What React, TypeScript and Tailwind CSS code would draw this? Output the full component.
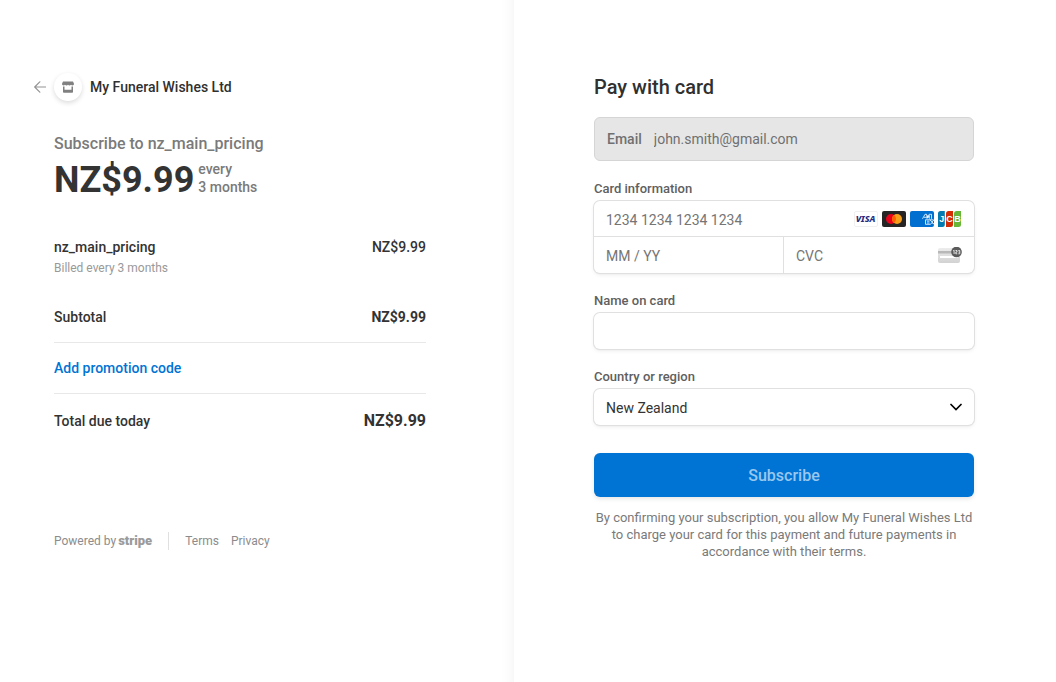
import { useState } from "react";
import type { ReactNode } from "react";

const COMPANY = "My Funeral Wishes Ltd";
const PRODUCT = "nz_main_pricing";
const PRICE = "NZ$9.99";

const countries = ["Australia", "Canada", "New Zealand", "United Kingdom", "United States"];

// Shared look of the white form fields: 1px outline plus a soft drop shadow
const fieldBox =
  "rounded-md bg-white shadow-[0_0_0_1px_#e0e0e0,0_2px_4px_0_rgba(0,0,0,0.07),0_1px_2px_0_rgba(0,0,0,0.05)]";

const BackArrow = () => (
  <svg viewBox="0 0 12 12" className="h-3 w-3" aria-hidden="true">
    <path
      d="M11.5 6H1M5.8 0.8 0.7 6l5.100 5.200"
      fill="none"
      stroke="#949494"
      strokeWidth="1.2"
      strokeLinecap="round"
      strokeLinejoin="round"
    />
  </svg>
);

const StoreIcon = () => (
  <svg viewBox="0 0 12 12" className="h-3 w-3" aria-hidden="true">
    <path
      d="M1 0.500h10l1 2.300c0 1-.7 1.700-1.500 1.700-.7 0-1.200-.3-1.500-.8-.3.5-.9.8-1.500.8s-1.200-.3-1.500-.8c-.3.5-.9.8-1.500.8S3.300 4.200 3 3.700c-.3.5-.8.8-1.500.8C.7 4.500 0 3.800 0 2.800z"
      fill="#808080"
    />
    <path d="M1 5.500h1.500v3.200h7V5.500H11V11a.8.8 0 0 1-.8.8H1.800A.8.8 0 0 1 1 11z" fill="#808080" />
  </svg>
);

const VisaIcon = () => (
  <svg viewBox="0 0 24 16" className="h-4 w-6" role="img" aria-label="Visa">
    <rect x="0.5" y="0.5" width="23" height="15" rx="1.5" fill="#fff" stroke="#f0f0f0" />
    <text
      x="11.5"
      y="11.300"
      textAnchor="middle"
      fontFamily="Noto Sans, sans-serif"
      fontSize="9"
      fontWeight="800"
      fontStyle="italic"
      fill="#252b80"
    >
      VISA
    </text>
  </svg>
);

const MastercardIcon = () => (
  <svg viewBox="0 0 24 16" className="h-4 w-6" role="img" aria-label="Mastercard">
    <rect width="24" height="16" rx="2" fill="#252525" />
    <circle cx="9" cy="8" r="5" fill="#eb001b" />
    <circle cx="15" cy="8" r="5" fill="#f79e1b" />
    <path d="M12 4a5 5 0 0 1 0 8 5 5 0 0 1 0-8z" fill="#ff5f00" />
  </svg>
);

const AmexIcon = () => (
  <svg viewBox="0 0 24 16" className="h-4 w-6" role="img" aria-label="American Express">
    <rect width="24" height="16" rx="2" fill="#016fd0" />
    <g fill="none" stroke="#fff" strokeWidth="0.8">
      <path d="M12.500 7.800 15 3.300h1.500l1.300 3 1.400-3h2.300v4.500M14 6.300h2.800M17 7.800V4.500l.8 2.500 1.500-2.500v3.300" />
      <path d="M23.500 8.800H15.500v4.500h5l1.500-1.800 1.800 1.800M19.500 10.200h-2.500M19.500 12h-2.500M20 8.800l4 4.500M24 8.800l-2 2.200" />
    </g>
  </svg>
);

const JcbIcon = () => (
  <svg viewBox="0 0 24 16" className="h-4 w-6" role="img" aria-label="JCB">
    <path d="M2.500 0h4.300v13.500A2.500 2.500 0 0 1 4.300 16H0V2.500A2.500 2.500 0 0 1 2.500 0z" fill="#047ab1" />
    <path d="M10.500 0h4.500v13.500a2.500 2.500 0 0 1-2.500 2.500H8V2.500A2.500 2.500 0 0 1 10.500 0z" fill="#d42d06" />
    <path d="M18.500 0H23v13.500a2.500 2.500 0 0 1-2.500 2.500H16V2.500A2.500 2.500 0 0 1 18.500 0z" fill="#67b637" />
    <g fontFamily="Liberation Sans, sans-serif" fontSize="9" fontWeight="700" fill="#fff" textAnchor="middle">
      <text x="3.800" y="11.200">J</text>
      <text x="11.600" y="11.200">C</text>
      <text x="19.500" y="11.200">B</text>
    </g>
  </svg>
);

const CvcIcon = () => (
  <svg viewBox="0 0 24 16" className="h-4 w-6" aria-hidden="true">
    <defs>
      <linearGradient id="cvc-card" x1="0" y1="0" x2="0" y2="1">
        <stop offset="0" stopColor="#ececec" />
        <stop offset="1" stopColor="#d2d2d2" />
      </linearGradient>
    </defs>
    <rect y="1" width="22" height="15" rx="2" fill="url(#cvc-card)" />
    <rect y="4" width="22" height="2.500" fill="#b8b8b8" />
    <rect x="2" y="9" width="18" height="2" fill="#fff" />
    <circle cx="18.500" cy="5" r="5.300" fill="#5a5a5a" />
    <path
      d="M15.200 3.900l.9-.7v3.800M17.500 3.500h1.500v1.600h-1.200v1.700h1.500M20.300 3.500h1.500v3.300h-1.500M20.500 5.100h1.200"
      fill="none"
      stroke="#fff"
      strokeWidth="0.8"
    />
  </svg>
);

interface FieldProps {
  id: string;
  label: string;
  children: ReactNode;
}

const Field = ({ id, label, children }: FieldProps) => (
  <div className="mt-5">
    <label htmlFor={id} className="block pb-1 text-[13px] leading-4 font-medium text-[#606060]">
      {label}
    </label>
    {children}
  </div>
);

const OrderSummary = () => (
  <section className="flex justify-end bg-white px-6 pt-[73px] pb-10 shadow-[inset_-16px_0_16px_-16px_rgba(0,0,0,0.06)] md:pr-20">
    <div className="w-full max-w-[380px] pr-2">
      <header className="-ml-5 flex h-7 items-center">
        <a href="#" aria-label="Back" className="mr-2">
          <BackArrow />
        </a>
        <span className="flex h-7 w-7 items-center justify-center rounded-full bg-white shadow-[0_2px_5px_rgba(0,0,0,0.14)]">
          <StoreIcon />
        </span>
        <span className="ml-2 text-sm font-medium text-[#303030]">{COMPANY}</span>
      </header>

      <h1 className="mt-[33px] text-base leading-5 font-medium text-[#7a7a7a]">Subscribe to {PRODUCT}</h1>
      <div className="mt-1 flex items-start gap-1">
        <span className="text-4xl leading-[44px] font-bold text-[#333333]">{PRICE}</span>
        <span className="pt-0.5 text-sm leading-[18px] font-medium text-[#7a7a7a]">
          every
          <br />
          3 months
        </span>
      </div>

      <div className="mt-[35px] flex justify-between text-sm leading-5 font-medium text-[#333333]">
        <div>
          <p>{PRODUCT}</p>
          <p className="pt-px text-xs leading-5 font-normal text-[#999999]">Billed every 3 months</p>
        </div>
        <p>{PRICE}</p>
      </div>

      <div className="mt-7 text-sm leading-5 font-medium text-[#333333]">
        <div className="flex justify-between border-b border-[#e8e8e8] pt-px pb-[15px]">
          <span>Subtotal</span>
          <span className="font-bold">{PRICE}</span>
        </div>
        <div className="border-b border-[#e8e8e8] py-[15px]">
          <button type="button" className="block font-medium text-[#0074d4]">
            Add promotion code
          </button>
        </div>
        <div className="flex items-center justify-between pt-[17px]">
          <span>Total due today</span>
          <span className="text-base leading-5 font-bold">{PRICE}</span>
        </div>
      </div>

      <footer className="mt-[100px] flex items-center text-xs leading-5 text-[#8c8c8c]">
        <a href="#" className="flex items-center gap-0.5">
          Powered by <span className="text-[13px] font-black text-[#9b9b9b]">stripe</span>
        </a>
        <span className="mx-4 h-[18px] w-px bg-[#e0e0e0]" />
        <a href="#">Terms</a>
        <a href="#" className="ml-3">
          Privacy
        </a>
      </footer>
    </div>
  </section>
);

const PaymentForm = () => {
  const [country, setCountry] = useState("New Zealand");

  return (
    <section className="bg-white px-6 pt-[73px] pb-10 md:pl-20">
      <form className="w-full max-w-[380px]" onSubmit={(e) => e.preventDefault()}>
        <h2 className="text-xl leading-7 font-medium text-[#303030]">Pay with card</h2>

        <div className="mt-4 flex h-11 items-center gap-3 rounded-md border border-[#d5d5d5] bg-[#e6e6e6] px-3 text-sm text-[#707070]">
          <label htmlFor="email" className="font-medium">
            Email
          </label>
          <input
            id="email"
            type="email"
            readOnly
            value="john.smith@gmail.com"
            className="min-w-0 flex-1 outline-none"
          />
        </div>

        <Field id="card-number" label="Card information">
          <div className={`${fieldBox} text-sm text-[#333333]`}>
            <div className="flex h-9 items-center border-b border-[#e0e0e0] px-3">
              <input
                id="card-number"
                placeholder="1234 1234 1234 1234"
                className="min-w-0 flex-1 pt-0.5 outline-none placeholder:text-[#757575]"
              />
              <div className="flex gap-1">
                <VisaIcon />
                <MastercardIcon />
                <AmexIcon />
                <JcbIcon />
              </div>
            </div>
            <div className="flex h-9">
              <input
                aria-label="Expiry date"
                placeholder="MM / YY"
                className="w-1/2 border-r border-[#e0e0e0] px-3 pt-0.5 outline-none placeholder:text-[#757575]"
              />
              <div className="flex w-1/2 items-center px-3">
                <input
                  aria-label="CVC"
                  placeholder="CVC"
                  className="min-w-0 flex-1 pt-0.5 outline-none placeholder:text-[#757575]"
                />
                <CvcIcon />
              </div>
            </div>
          </div>
        </Field>

        <Field id="name" label="Name on card">
          <input id="name" className={`${fieldBox} block h-9 w-full px-3 text-sm text-[#333333] outline-none`} />
        </Field>

        <Field id="country" label="Country or region">
          <div className="relative">
            <select
              id="country"
              value={country}
              onChange={(e) => setCountry(e.target.value)}
              className={`${fieldBox} block h-9 w-full appearance-none px-3 pt-0.5 text-sm text-[#333333] outline-none`}
            >
              {countries.map((name) => (
                <option key={name}>{name}</option>
              ))}
            </select>
            <svg
              viewBox="0 0 12 12"
              className="pointer-events-none absolute top-3 right-3 h-3 w-3"
              aria-hidden="true"
            >
              <path d="M1 3.500l5 5 5-5" fill="none" stroke="#000" strokeWidth="1.700" strokeLinecap="round" />
            </svg>
          </div>
        </Field>

        <button
          type="submit"
          className="mt-7 h-11 w-full rounded-md bg-[#0074d4] pt-0.5 text-base font-medium text-[#99c7ee] shadow-[0_2px_4px_rgba(0,0,0,0.1)]"
        >
          Subscribe
        </button>

        <p className="mt-3 text-center text-[13px] leading-[17px] text-[#7a7a7a]">
          By confirming your subscription, you allow {COMPANY} to charge your card for this payment and future
          payments in accordance with their terms.
        </p>
      </form>
    </section>
  );
};

const App = () => (
  <main className="grid min-h-screen grid-cols-1 bg-white font-[Roboto,sans-serif] md:grid-cols-2 md:pr-7">
    <OrderSummary />
    <PaymentForm />
  </main>
);

export default App;
